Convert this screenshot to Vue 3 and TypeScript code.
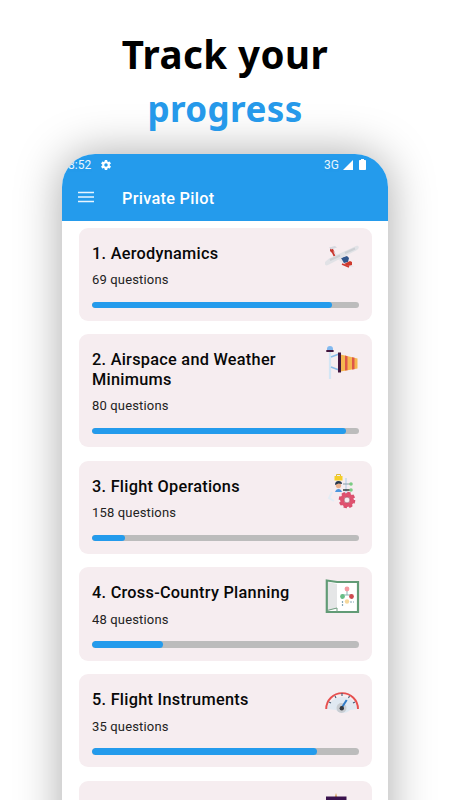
<script setup lang="ts">
interface Topic {
  title: string
  count: number
  progress: number
  icon: 'plane' | 'windsock' | 'operations' | 'map' | 'gauge' | 'tower'
}

const topics: Topic[] = [
  { title: '1. Aerodynamics', count: 69, progress: 90.2, icon: 'plane' },
  { title: '2. Airspace and Weather Minimums', count: 80, progress: 95.2, icon: 'windsock' },
  { title: '3. Flight Operations', count: 158, progress: 12.2, icon: 'operations' },
  { title: '4. Cross-Country Planning', count: 48, progress: 26.8, icon: 'map' },
  { title: '5. Flight Instruments', count: 35, progress: 84.4, icon: 'gauge' },
  { title: '6. Communication Procedures', count: 52, progress: 50, icon: 'tower' },
]
</script>

<template>
  <main class="promo">
    <h1 class="headline">
      <span class="line first">Track your</span>
      <span class="line second">progress</span>
    </h1>
    <section class="phone">
      <header class="top">
        <div class="status">
          <span class="clock">8:52</span>
          <svg class="gear" viewBox="0 0 24 24"><path fill="#fff" fill-rule="evenodd" d="M19.4 13a7.500 7.500 0 0 0 0-2l2.100-1.650a.5.5 0 0 0 .1-.65l-2-3.450a.5.5 0 0 0-.6-.2l-2.500 1a7.300 7.300 0 0 0-1.700-1L14.450 2.400A.5.5 0 0 0 14 2h-4a.5.5 0 0 0-.5.4L9.150 5.050a7.700 7.700 0 0 0-1.700 1L5 5.050a.5.5 0 0 0-.6.2l-2 3.450a.5.5 0 0 0 .1.65L4.600 11a7.500 7.500 0 0 0 0 2l-2.100 1.650a.5.5 0 0 0-.1.65l2 3.450c.1.2.4.3.6.2l2.450-1a7.700 7.700 0 0 0 1.700 1l.35 2.650c0 .25.25.4.5.4h4c.25 0 .45-.15.45-.4l.4-2.650a7.300 7.300 0 0 0 1.650-1l2.500 1c.2.1.5 0 .6-.2l2-3.450a.5.5 0 0 0-.1-.65ZM12 15.500a3.500 3.500 0 1 1 0-7 3.500 3.500 0 0 1 0 7Z" /></svg>
          <span class="network">3G</span>
          <svg class="signal" viewBox="0 0 10 10"><path fill="#fff" d="M0 10 10 0v10Z" /></svg>
          <svg class="battery" viewBox="0 0 7 11"><path fill="#fff" d="M2 0h3v1h1.200q.8 0 .8.800v8.400q0 .8-.8.800H.8Q0 11 0 10.200V1.800Q0 1 .8 1H2Z" /></svg>
        </div>
        <div class="appbar">
          <svg class="menu" viewBox="0 0 16 12"><path d="M0 1.500h16M0 6h16M0 10.500h16" stroke="#e9f6ff" stroke-width="1.700" /></svg>
          <span class="apptitle">Private Pilot</span>
        </div>
      </header>
      <div class="list">
        <article v-for="topic in topics" :key="topic.title" class="card">
          <div class="row">
            <h2>{{ topic.title }}</h2>
            <svg v-if="topic.icon === 'plane'" class="icon" viewBox="0 0 36 36">
              <path d="m5 8 3 1 4 8-2 2-3-6-2-2Z" fill="#c9372e" />
              <path d="m8 11 8 7 10 6 3 3h-5l-7-4-6-6Z" fill="#e9e7ec" />
              <path d="m4 7.500 6-1.500 2 1.500L6 9.500Z" fill="#d5d8df" />
              <path d="m17 24 7 3" stroke="#cf3830" stroke-width="1.600" />
              <path d="m16 18 6-2 2 2-1 4-4 1Z" fill="#31568c" />
              <path d="m19 24 6-3 2 1v3l-4 1Z" fill="#cf3a2e" />
              <path d="M0 22c-1 3 1 4 3 3l29-15c3-2 2-5-1-4L4 18.500Z" fill="#e1e2e6" />
              <path d="m5 20 10-4.500m5-2.500 10-4.500" stroke="#cdd0d4" stroke-width="2" />
            </svg>
            <svg v-else-if="topic.icon === 'windsock'" class="icon" viewBox="0 0 36 36">
              <path d="M5 5v28" stroke="#d3e6f5" stroke-width="2.200" />
              <path d="m6 11 8-3M6 21l8 3" stroke="#8abce9" stroke-width="1.800" />
              <path d="M2 4V3a3 3 0 0 1 6 0v1Z" fill="#83b9ef" />
              <path d="M1.300 4h7.300v2H1.300Z" fill="#42163e" />
              <path d="m15.500 8.500 17 4v10l-17 3Z" fill="#f5b750" />
              <path d="m20 9.500 2.500.7v14l-2.500.4Zm7 1.700 2.500.6v11.400l-2.500.4Z" fill="#de564a" />
              <path d="M13 6.500h3v20h-3Z" fill="#42163e" />
            </svg>
            <svg v-else-if="topic.icon === 'operations'" class="icon" viewBox="0 0 36 36">
              <path d="M21 5v17" stroke="#cfddeb" stroke-width="2" />
              <path d="m7 19-3 6 5 3" fill="none" stroke="#e3edf5" stroke-width="2" />
              <path d="M9.500 3h8v4.500h-8Z" fill="#f5ce28" /><path d="M11.500 3V1.500h4V3" fill="none" stroke="#dfbd32" />
              <circle cx="13.500" cy="12.500" r="2.700" fill="#ecb28f" /><path d="M10 12q0-4 3.500-4t3.500 3l-3.500-.5Z" fill="#27364b" />
              <path d="M10 19q1-3 3.500-3t3.500 3Z" fill="#4d97df" />
              <path d="M18 11h7" stroke="#9baab5" stroke-width="1.200" /><path d="M18 17h7" stroke="#15221f" stroke-width="1.300" />
              <circle cx="26" cy="11" r="1.800" fill="#7bcc83" /><circle cx="26" cy="17" r="1.800" fill="#7bcc83" />
              <circle cx="22" cy="27" r="7.200" fill="none" stroke="#d84d6c" stroke-width="2.200" stroke-dasharray="3.400 2.255" />
              <circle cx="22" cy="27" r="5" fill="#f6edef" stroke="#df526f" stroke-width="3.800" />
              <circle cx="22" cy="27" r="2.900" fill="#f7edf0" stroke="#993b52" stroke-width=".6" />
            </svg>
            <svg v-else-if="topic.icon === 'map'" class="icon" viewBox="0 0 36 36">
              <path d="M1.800 1.500 12 3h21v30H1.800Z" fill="#fff" stroke="#629b76" stroke-width="2.200" />
              <path d="m3 3 9 2v24L3 31.500Z" fill="#e5e6e7" />
              <path d="M2 31.500 12 29v4" fill="none" stroke="#709d80" />
              <path d="M22 11v5m-5 0h10m-10 0v4m10-4v4" fill="none" stroke="#87b7b2" />
              <circle cx="22" cy="10" r="2.400" fill="#f59aa1" /><circle cx="17.500" cy="17.500" r="2.400" fill="#67bd86" />
              <circle cx="26.500" cy="17.500" r="2.400" fill="#cf4a50" /><circle cx="22" cy="22.500" r="2.200" fill="#f5d79c" />
              <path d="M25 23h2m1 0h1M17.500 22v6" stroke="#86a7b5" stroke-width="1.200" stroke-dasharray="2 1" />
            </svg>
            <svg v-else-if="topic.icon === 'gauge'" class="icon" viewBox="0 0 36 36">
              <path d="M2 23a16 16 0 0 1 31 0l-8 1c-3 4-11 4-14 0Z" fill="#e0e9f2" />
              <path d="M1.200 23A15.900 15.900 0 0 1 33 23" fill="none" stroke="#e6504f" stroke-width="1.900" />
              <path d="m4 16 2 1M10 10l1 2M17 7v3M24.500 10l-1 2M30 16l-2 1" stroke="#445b76" stroke-width="1.100" />
              <circle cx="16.500" cy="22" r="5" fill="#c9cdd2" />
              <path d="m16.500 22 5.200-8" stroke="#317bc6" stroke-width="2" />
              <circle cx="16.800" cy="22.300" r="2.200" fill="#34383e" />
            </svg>
            <svg v-else class="icon" viewBox="0 0 36 36">
              <path d="m11 0 1.500 5h-3Z" fill="#d9a55c" /><path d="M1 3.500h20.500V14H1Z" fill="#3a124d" />
            </svg>
          </div>
          <p>{{ topic.count }} questions</p>
          <div class="track"><div class="fill" :style="{ width: topic.progress + '%' }"></div></div>
        </article>
      </div>
    </section>
  </main>
</template>

<style>
html, body { margin: 0; overflow: hidden; background: #fff; }
</style>

<style scoped>
.promo { box-sizing: border-box; width: 450px; height: 800px; overflow: hidden; padding-top: 28px; background: #fff; font-family: Roboto, sans-serif; }
.headline { display: flex; flex-direction: column; align-items: center; height: 126px; margin: 0; font: 700 38.500px/53.500px "Noto Sans", sans-serif; }
.line { white-space: nowrap; }
.first { color: #000; letter-spacing: .45px; }
.second { color: #2699ea; font-size: 35px; letter-spacing: .4px; }
.phone { width: 326px; height: 760px; margin-left: 62px; overflow: hidden; border-radius: 33px 33px 0 0; background: #fff; box-shadow: 0 0 46px rgba(0, 0, 0, .34); }
.top { height: 66.500px; background: #249bec; color: #fff; }
.status { display: flex; align-items: center; height: 21px; padding-left: 6px; }
.clock, .network { padding-top: 1px; font-size: 12px; line-height: 20px; opacity: .9; }
.clock { width: 32px; }
.gear { width: 12px; height: 12px; }
.network { width: 18.500px; margin-left: 212px; }
.signal { width: 10px; height: 10px; }
.battery { width: 7px; height: 11px; margin-left: 6px; }
.appbar { display: flex; align-items: center; height: 45.500px; padding-left: 15.500px; }
.menu { width: 16px; height: 12px; margin-bottom: 2px; }
.apptitle { margin: 1px 0 0 28.500px; font-size: 16.300px; font-weight: 500; letter-spacing: .3px; }
.list { display: flex; flex-direction: column; gap: 13.600px; padding: 7px 16px 0 16.500px; }
.card { box-sizing: border-box; padding: 16px 13.500px 12.500px; border-radius: 9px; background: #f6edf0; }
.row { display: flex; justify-content: space-between; align-items: flex-start; }
h2 { width: 225px; margin: 0; color: #080808; font-size: 16.300px; font-weight: 500; line-height: 19.500px; letter-spacing: .27px; }
.card:nth-child(2) h2 { width: 200px; }
.icon { flex: none; width: 36px; height: 36px; margin: -4px -2px -36px 0; }
p { margin: 9px 0 0; color: #222; font-size: 13px; line-height: 15px; letter-spacing: .16px; }
.track { height: 6.700px; margin-top: 14.500px; overflow: hidden; border-radius: 4px; background: #bcbcbc; }
.fill { height: 100%; border-radius: 4px; background: #249bec; }
</style>
